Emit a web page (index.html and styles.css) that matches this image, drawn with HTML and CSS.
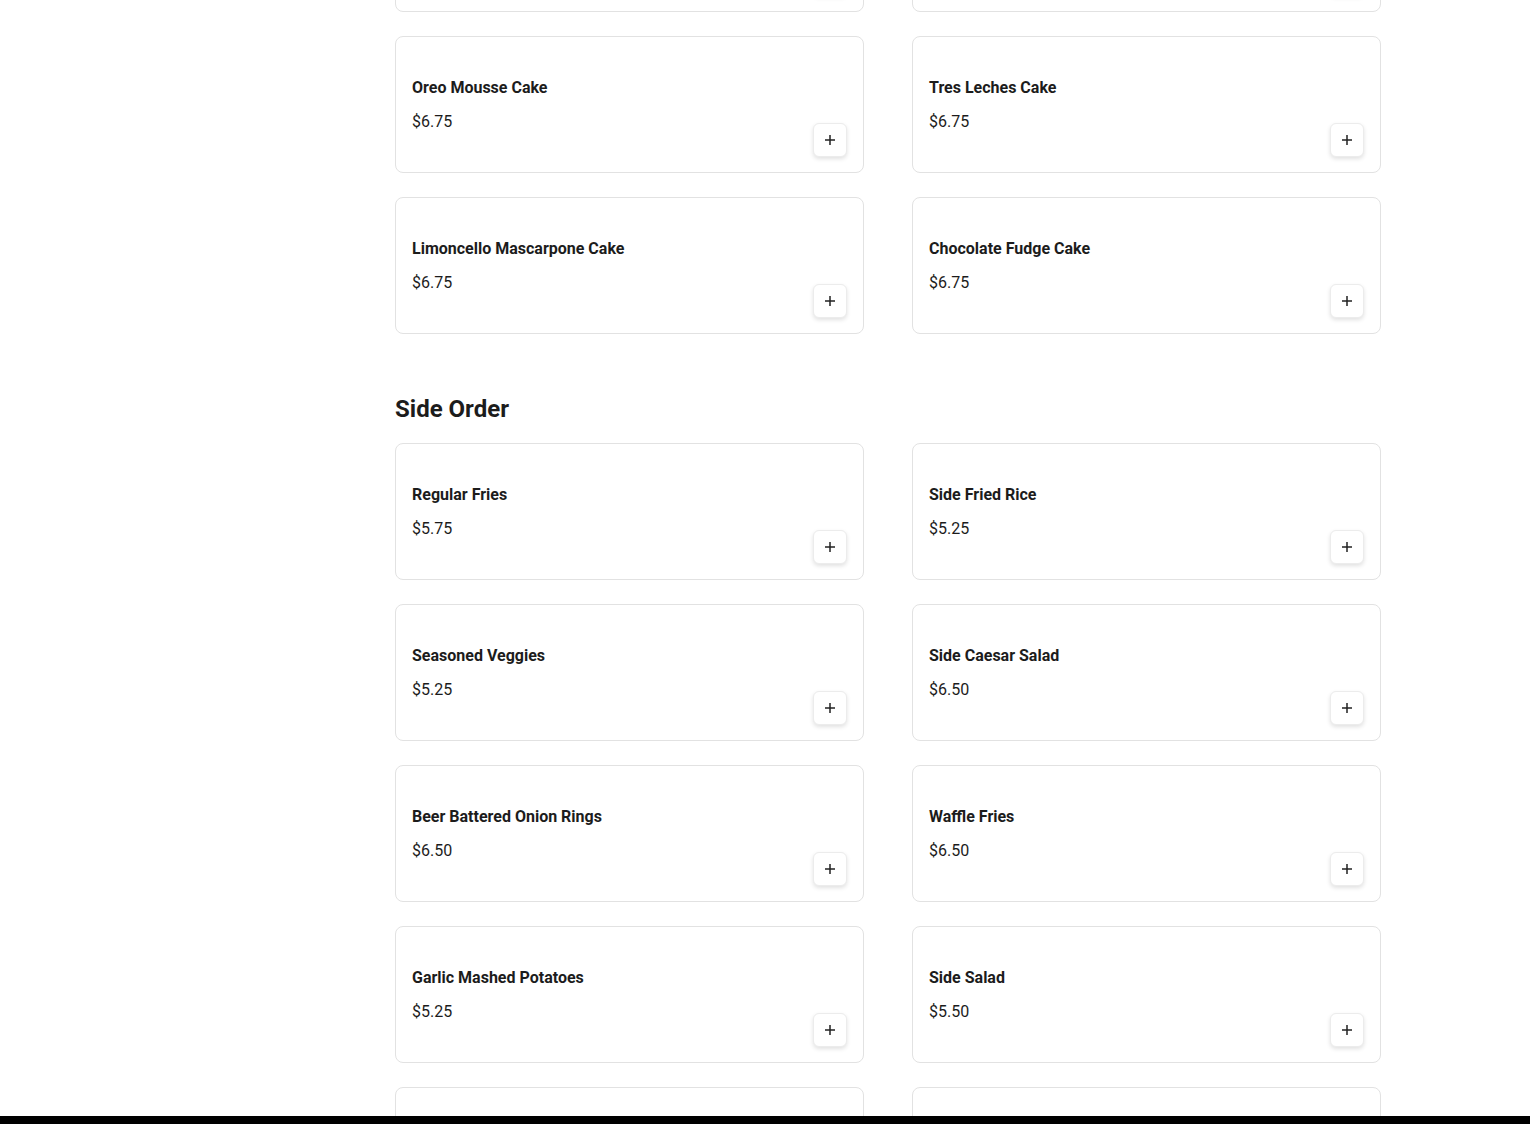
FILE: index.html
```html
<!DOCTYPE html>
<html lang="en">
<head>
<meta charset="utf-8">
<title>Menu</title>
<link rel="stylesheet" href="styles.css">
</head>
<body>
<div class="layout">
  <aside class="side"></aside>
  <main class="content">
    <section class="section">
      <div class="grid">
        <div class="card"><div class="info"><div class="name">Cheesecake</div><div class="price">$6.75</div></div><button class="add" aria-label="Add"><svg viewBox="0 0 12 12" width="12" height="12"><path d="M6 1v10M1 6h10" stroke="#222" stroke-width="1.5" fill="none"/></svg></button></div>
        <div class="card"><div class="info"><div class="name">Carrot Cake</div><div class="price">$6.75</div></div><button class="add" aria-label="Add"><svg viewBox="0 0 12 12" width="12" height="12"><path d="M6 1v10M1 6h10" stroke="#222" stroke-width="1.5" fill="none"/></svg></button></div>
        <div class="card"><div class="info"><div class="name">Oreo Mousse Cake</div><div class="price">$6.75</div></div><button class="add" aria-label="Add"><svg viewBox="0 0 12 12" width="12" height="12"><path d="M6 1v10M1 6h10" stroke="#222" stroke-width="1.5" fill="none"/></svg></button></div>
        <div class="card"><div class="info"><div class="name">Tres Leches Cake</div><div class="price">$6.75</div></div><button class="add" aria-label="Add"><svg viewBox="0 0 12 12" width="12" height="12"><path d="M6 1v10M1 6h10" stroke="#222" stroke-width="1.5" fill="none"/></svg></button></div>
        <div class="card"><div class="info"><div class="name">Limoncello Mascarpone Cake</div><div class="price">$6.75</div></div><button class="add" aria-label="Add"><svg viewBox="0 0 12 12" width="12" height="12"><path d="M6 1v10M1 6h10" stroke="#222" stroke-width="1.5" fill="none"/></svg></button></div>
        <div class="card"><div class="info"><div class="name">Chocolate Fudge Cake</div><div class="price">$6.75</div></div><button class="add" aria-label="Add"><svg viewBox="0 0 12 12" width="12" height="12"><path d="M6 1v10M1 6h10" stroke="#222" stroke-width="1.5" fill="none"/></svg></button></div>
      </div>
    </section>
    <section class="section">
      <h2 class="heading">Side Order</h2>
      <div class="grid">
        <div class="card"><div class="info"><div class="name">Regular Fries</div><div class="price">$5.75</div></div><button class="add" aria-label="Add"><svg viewBox="0 0 12 12" width="12" height="12"><path d="M6 1v10M1 6h10" stroke="#222" stroke-width="1.5" fill="none"/></svg></button></div>
        <div class="card"><div class="info"><div class="name">Side Fried Rice</div><div class="price">$5.25</div></div><button class="add" aria-label="Add"><svg viewBox="0 0 12 12" width="12" height="12"><path d="M6 1v10M1 6h10" stroke="#222" stroke-width="1.5" fill="none"/></svg></button></div>
        <div class="card"><div class="info"><div class="name">Seasoned Veggies</div><div class="price">$5.25</div></div><button class="add" aria-label="Add"><svg viewBox="0 0 12 12" width="12" height="12"><path d="M6 1v10M1 6h10" stroke="#222" stroke-width="1.5" fill="none"/></svg></button></div>
        <div class="card"><div class="info"><div class="name">Side Caesar Salad</div><div class="price">$6.50</div></div><button class="add" aria-label="Add"><svg viewBox="0 0 12 12" width="12" height="12"><path d="M6 1v10M1 6h10" stroke="#222" stroke-width="1.5" fill="none"/></svg></button></div>
        <div class="card"><div class="info"><div class="name">Beer Battered Onion Rings</div><div class="price">$6.50</div></div><button class="add" aria-label="Add"><svg viewBox="0 0 12 12" width="12" height="12"><path d="M6 1v10M1 6h10" stroke="#222" stroke-width="1.5" fill="none"/></svg></button></div>
        <div class="card"><div class="info"><div class="name">Waffle Fries</div><div class="price">$6.50</div></div><button class="add" aria-label="Add"><svg viewBox="0 0 12 12" width="12" height="12"><path d="M6 1v10M1 6h10" stroke="#222" stroke-width="1.5" fill="none"/></svg></button></div>
        <div class="card"><div class="info"><div class="name">Garlic Mashed Potatoes</div><div class="price">$5.25</div></div><button class="add" aria-label="Add"><svg viewBox="0 0 12 12" width="12" height="12"><path d="M6 1v10M1 6h10" stroke="#222" stroke-width="1.5" fill="none"/></svg></button></div>
        <div class="card"><div class="info"><div class="name">Side Salad</div><div class="price">$5.50</div></div><button class="add" aria-label="Add"><svg viewBox="0 0 12 12" width="12" height="12"><path d="M6 1v10M1 6h10" stroke="#222" stroke-width="1.5" fill="none"/></svg></button></div>
        <div class="card"><div class="info"><div class="name">Mac &amp; Cheese</div><div class="price">$5.75</div></div><button class="add" aria-label="Add"><svg viewBox="0 0 12 12" width="12" height="12"><path d="M6 1v10M1 6h10" stroke="#222" stroke-width="1.5" fill="none"/></svg></button></div>
        <div class="card"><div class="info"><div class="name">Sweet Potato Fries</div><div class="price">$6.50</div></div><button class="add" aria-label="Add"><svg viewBox="0 0 12 12" width="12" height="12"><path d="M6 1v10M1 6h10" stroke="#222" stroke-width="1.5" fill="none"/></svg></button></div>
      </div>
    </section>
  </main>
</div>
<div class="bottom-bar"></div>
</body>
</html>
```

FILE: styles.css
```css
* { box-sizing: border-box; }
html, body { margin: 0; padding: 0; background: #fff; }
body {
  font-family: Roboto, "Liberation Sans", Arial, sans-serif;
  color: #1c1c1c;
  height: 1124px;
  overflow: hidden;
}
.layout {
  display: flex;
  margin-top: -125px;
}
.side { width: 395px; flex: none; }
.content { width: 986px; flex: none; }
.section + .section { margin-top: 59px; }
.heading {
  margin: 0 0 18px;
  font-size: 24px;
  line-height: 32px;
  font-weight: 700;
  color: #1c1c1c;
}
.grid {
  display: grid;
  grid-template-columns: 1fr 1fr;
  column-gap: 48px;
  row-gap: 24px;
}
.card {
  border: 1px solid #e2e2e2;
  border-radius: 8px;
  padding: 16px 16px 15px;
  display: flex;
  justify-content: space-between;
  align-items: flex-end;
  background: #fff;
  height: 137px;
}
.info { padding-top: 23px; padding-bottom: 23px; }
.name {
  font-size: 16px;
  line-height: 24px;
  font-weight: 700;
  color: #1c1c1c;
}
.price {
  margin-top: 10px;
  font-size: 16px;
  line-height: 24px;
  font-weight: 400;
  color: #1c1c1c;
}
.add {
  width: 34px;
  height: 34px;
  padding: 0;
  border: 1px solid #ececec;
  border-radius: 6px;
  background: #fff;
  box-shadow: 0 2px 4px rgba(0,0,0,0.12);
  display: flex;
  align-items: center;
  justify-content: center;
  flex: none;
}
.add svg { display: block; }
.bottom-bar {
  position: fixed;
  left: 0;
  right: 0;
  bottom: 0;
  height: 8px;
  background: #000;
}
```
